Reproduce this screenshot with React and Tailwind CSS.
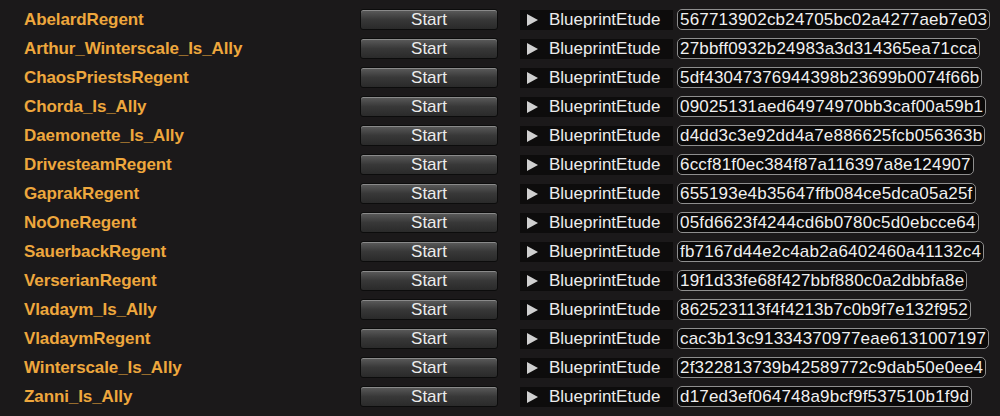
const rows = [
  ["AbelardRegent", "567713902cb24705bc02a4277aeb7e03"],
  ["Arthur_Winterscale_Is_Ally", "27bbff0932b24983a3d314365ea71cca"],
  ["ChaosPriestsRegent", "5df43047376944398b23699b0074f66b"],
  ["Chorda_Is_Ally", "09025131aed64974970bb3caf00a59b1"],
  ["Daemonette_Is_Ally", "d4dd3c3e92dd4a7e886625fcb056363b"],
  ["DrivesteamRegent", "6ccf81f0ec384f87a116397a8e124907"],
  ["GaprakRegent", "655193e4b35647ffb084ce5dca05a25f"],
  ["NoOneRegent", "05fd6623f4244cd6b0780c5d0ebcce64"],
  ["SauerbackRegent", "fb7167d44e2c4ab2a6402460a41132c4"],
  ["VerserianRegent", "19f1d33fe68f427bbf880c0a2dbbfa8e"],
  ["Vladaym_Is_Ally", "862523113f4f4213b7c0b9f7e132f952"],
  ["VladaymRegent", "cac3b13c91334370977eae6131007197"],
  ["Winterscale_Is_Ally", "2f322813739b42589772c9dab50e0ee4"],
  ["Zanni_Is_Ally", "d17ed3ef064748a9bcf9f537510b1f9d"],
];

function Row({ name, hash }) {
  return (
    <div className="flex items-center h-[29px]">
      <div className="w-[360px] pl-[24px] font-bold text-[17px] text-[#eea73d] leading-none whitespace-nowrap tracking-[-0.1px]">
        {name}
      </div>
      <button className="w-[138px] h-[21px] rounded-[3px] border border-[#0c0c0c] bg-gradient-to-b from-[#5c5c5c] via-[#383838] to-[#2a2a2a] shadow-[inset_0_1px_0_#8a8a8a] text-[#ececec] text-[17px] leading-none flex items-center justify-center">
        Start
      </button>
      <div className="ml-[22px] w-[153px] h-[20px] bg-[#0d0c0c] flex items-center text-[#ececec] text-[17px] leading-none">
        <svg width="11" height="12" viewBox="0 0 11 12" className="ml-[7px]">
          <polygon points="0,0 11,6 0,12" fill="#d0d0d0" />
        </svg>
        <span className="ml-[11px] whitespace-nowrap">BlueprintEtude</span>
      </div>
      <div className="ml-[4px] h-[21px] px-[2px] rounded-[5px] border border-[#8e8e8e] bg-[#0a0909] flex items-center text-[#f0f0f0] text-[17px] leading-none whitespace-nowrap tracking-[0.2px]">
        {hash}
      </div>
    </div>
  );
}

export default function App() {
  return (
    <div
      className="w-[1000px] h-[416px] overflow-hidden bg-[#1b191a] pt-[5px]"
      style={{ fontFamily: '"Liberation Sans", Arial, sans-serif' }}
    >
      {rows.map(([n, h]) => (
        <Row key={n} name={n} hash={h} />
      ))}
    </div>
  );
}
